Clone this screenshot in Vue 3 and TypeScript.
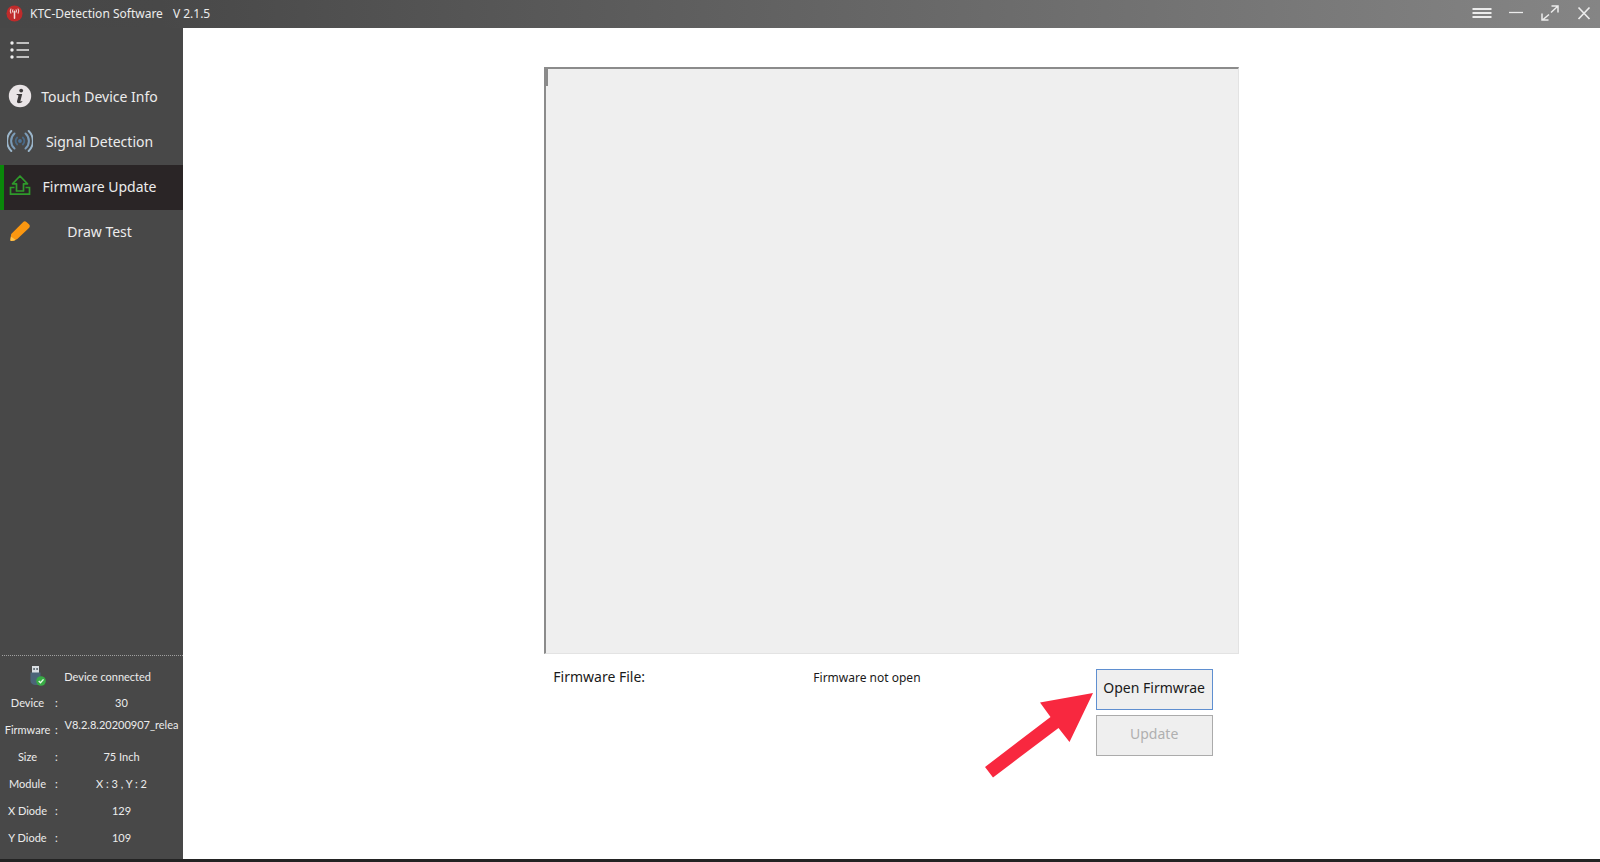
<script setup lang="ts">
import { ref } from 'vue'

type NavId = 'info' | 'signal' | 'firmware' | 'draw'

const navItems: { id: NavId; label: string }[] = [
  { id: 'info', label: 'Touch Device Info' },
  { id: 'signal', label: 'Signal Detection' },
  { id: 'firmware', label: 'Firmware Update' },
  { id: 'draw', label: 'Draw Test' },
]

const details: { name: string; value: string; long?: boolean }[] = [
  { name: 'Device', value: '30' },
  { name: 'Firmware', value: 'V8.2.8.20200907_relea', long: true },
  { name: 'Size', value: '75 Inch' },
  { name: 'Module', value: 'X : 3 , Y : 2' },
  { name: 'X Diode', value: '129' },
  { name: 'Y Diode', value: '109' },
]

const active = ref<NavId>('firmware')
const log = ref('')
</script>

<template>
  <div class="app">
    <header class="titlebar">
      <svg class="logo" viewBox="0 0 18 18" aria-hidden="true">
        <circle cx="9" cy="9" r="8.5" fill="#bf2b2b" />
        <g fill="none" stroke="#f3dcda" stroke-linecap="round">
          <path d="M9 6.500v7.500" stroke-width="1.600" />
          <path d="M5.200 4.200c-1 1.400-1 3 0 4.400M12.800 4.200c1 1.400 1 3 0 4.400M7.300 5c-.6.9-.6 1.800 0 2.700M10.700 5c.6.9.6 1.800 0 2.700" stroke-width="1.100" />
        </g>
      </svg>
      <h1 class="title">KTC-Detection Software</h1>
      <span class="version">V 2.1.5</span>
      <div class="window-controls">
        <button type="button" aria-label="Menu">
          <svg viewBox="0 0 20 20"><path d="M.5 6h19M.5 10h19M.5 14h19" stroke-width="1.800" /></svg>
        </button>
        <button type="button" aria-label="Minimize">
          <svg viewBox="0 0 20 20"><path d="M3 9.500h14" stroke-width="1.300" /></svg>
        </button>
        <button type="button" aria-label="Maximize">
          <svg viewBox="0 0 20 20"><path d="M11.500 3H18v6.500M18 3l-7 6.500M9 11.500L2.500 17M2 10.500V17h6.500" stroke-width="1.500" /></svg>
        </button>
        <button type="button" aria-label="Close">
          <svg viewBox="0 0 20 20"><path d="M4.500 4.500l11 11.500M15.500 4.500l-11 11.500" stroke-width="1.700" /></svg>
        </button>
      </div>
    </header>

    <div class="body">
      <aside class="sidebar">
        <button type="button" class="collapse" aria-label="Toggle sidebar">
          <svg viewBox="0 0 20 18">
            <g fill="#f0f0f0"><circle cx="2" cy="2" r="1.700" /><circle cx="2" cy="9" r="1.700" /><circle cx="2" cy="16" r="1.700" /></g>
            <path d="M6.500 2h12.500M6.500 9h12.500M6.500 16h12.500" stroke="#e8e8e8" stroke-width="1.400" />
          </svg>
        </button>

        <nav class="nav">
          <button
            v-for="item in navItems"
            :key="item.id"
            type="button"
            class="nav-item"
            :class="{ active: active === item.id }"
            @click="active = item.id"
          >
            <svg v-if="item.id === 'info'" viewBox="0 0 26 26">
              <circle cx="13" cy="13" r="11.200" fill="#e9e4e6" />
              <circle cx="14.200" cy="7.600" r="1.900" fill="#3d3a3b" />
              <path d="M9.800 11h5.400l-1.800 7c-.1.700.4.800 1.500 0l.6.700c-1.600 1.700-6 2.300-5.500-.4l1.400-5.400c.1-.6-.3-.8-1.800-.9z" fill="#3d3a3b" />
            </svg>
            <svg v-else-if="item.id === 'signal'" viewBox="0 0 26 26" fill="none" stroke-linecap="round">
              <circle cx="13" cy="13" r="1.900" fill="#4d7396" />
              <path d="M10.200 9.500a4.700 4.700 0 0 0 0 7M15.800 9.500a4.700 4.700 0 0 1 0 7" stroke="#4a6a88" stroke-width="1.800" />
              <path d="M7.500 5.500a10 10 0 0 0 0 15M18.500 5.500a10 10 0 0 1 0 15" stroke="#7b9bb7" stroke-width="2" />
              <path d="M4.300 3a14 14 0 0 0 0 20M21.700 3a14 14 0 0 1 0 20" stroke="#9bb6cb" stroke-width="2" />
            </svg>
            <svg v-else-if="item.id === 'firmware'" viewBox="0 0 26 26" fill="none" stroke="#2f9a2b" stroke-width="1.700">
              <path d="M9.500 18V10.800H5.500L13 3L20.500 10.800H16.500V18Z" stroke-linejoin="round" />
              <path d="M7.500 14.500H3.500V21.200H22.500V14.500H18.500" />
            </svg>
            <svg v-else viewBox="0 0 26 26">
              <path d="M3.400 21.800l.8-5.700L16.200 4q1.500-1.400 3.200 0l2.800 2.600q1.400 1.500 0 3.100L10.300 21q-3 2-6.300 2-.8-.2-.6-1.200z" fill="#fb9710" />
              <path d="M3.400 21.800l.5-3.300 4.800 3.500q-2 .9-4.700 1-.8-.2-.6-1.200z" fill="#ffc34d" />
            </svg>
            <span>{{ item.label }}</span>
          </button>
        </nav>

        <section class="status" aria-label="Device status">
          <div class="connection">
            <svg viewBox="0 0 18 22" aria-hidden="true">
              <path d="M4 1h7v7H4z" fill="#d9dee2" />
              <path d="M5.200 3h1.800v2H5.200zM8.200 3h1.800v2H8.200z" fill="#6a747c" />
              <path d="M2.500 7.500h10V17q0 3-3 3h-2.500q-4.500-1-4.500-4z" fill="#4c6478" />
              <circle cx="13" cy="16" r="4.800" fill="#38ab45" />
              <path d="M10.700 16l1.800 1.800 3-3.400" fill="none" stroke="#e5ffe5" stroke-width="1.400" />
            </svg>
            <span>Device connected</span>
          </div>
          <dl class="details">
            <div v-for="row in details" :key="row.name" class="detail">
              <dt><span>{{ row.name }}</span><span>:</span></dt>
              <dd :class="{ long: row.long }">{{ row.value }}</dd>
            </div>
          </dl>
        </section>
      </aside>

      <main class="content">
        <div class="panel">
          <textarea v-model="log" class="log" aria-label="Update log" readonly></textarea>
          <span class="caret" aria-hidden="true"></span>
          <div class="controls">
            <span class="file-label">Firmware File:</span>
            <output class="file-state">Firmware not open</output>
            <div class="actions">
              <button type="button" class="open">Open Firmwrae</button>
              <button type="button" disabled>Update</button>
              <svg class="pointer" viewBox="0 0 108 85" aria-hidden="true">
                <path d="M108 0L55 9.500L65.500 24L0 74L8 84.500L73.500 35L84.500 49Z" fill="#f8283f" />
              </svg>
            </div>
          </div>
        </div>
      </main>
    </div>
  </div>
</template>

<style>
body {
  margin: 0;
}
</style>

<style scoped>
.app {
  display: flex;
  flex-direction: column;
  height: 100vh;
  box-sizing: border-box;
  border-bottom: 3px solid #232323;
  background: #fff;
  color: #1a1a1a;
  font-family: "Noto Sans", "Open Sans", sans-serif;
}

button {
  font: inherit;
  cursor: pointer;
}

.titlebar {
  display: flex;
  align-items: center;
  flex: none;
  height: 28px;
  padding: 0 6px 2px;
  box-sizing: border-box;
  background: linear-gradient(90deg, #474747, #484848 10%, #858585);
  color: #ececec;
  font-size: 12px;
}

.logo {
  width: 17px;
  height: 17px;
  margin-right: 7px;
}

.title {
  margin: 0 10px 0 0;
  font-size: 12px;
  font-weight: 400;
}

.window-controls {
  display: flex;
  gap: 14px;
  margin-left: auto;
}

.window-controls button {
  padding: 0;
  border: 0;
  background: none;
}

.window-controls svg {
  display: block;
  width: 20px;
  height: 26px;
  fill: none;
  stroke: #ececec;
}

.body {
  display: flex;
  flex: 1;
  min-height: 0;
}

.sidebar {
  display: flex;
  flex-direction: column;
  flex: none;
  width: 183px;
  background: #484848;
  color: #ececec;
}

.collapse {
  height: 47px;
  padding: 0 10px 4px;
  border: 0;
  background: none;
  text-align: left;
}

.collapse svg {
  display: block;
  width: 20px;
  height: 18px;
}

.nav-item {
  display: flex;
  align-items: center;
  width: 100%;
  height: 45px;
  padding: 0 17px 3px 3px;
  border: 0;
  border-left: 4px solid transparent;
  background: none;
  color: inherit;
  font-size: 14px;
}

.nav-item.active {
  border-left-color: #0a870a;
  background: #2a2526;
}

.nav-item svg {
  flex: none;
  width: 26px;
  height: 26px;
}

.nav-item span {
  flex: 1;
  text-align: center;
  white-space: nowrap;
}

.status {
  margin-top: auto;
  padding-bottom: 8px;
  font-family: Lato, "Noto Sans", sans-serif;
  font-size: 11px;
}

.connection {
  display: flex;
  align-items: center;
  justify-content: space-between;
  height: 34px;
  margin-left: 2px;
  padding: 7px 32px 0 26px;
  box-sizing: border-box;
  border-top: 1px dotted #a0a0a0;
  white-space: nowrap;
}

.connection svg {
  width: 18px;
  height: 22px;
}

.details {
  margin: 0;
}

.detail {
  display: flex;
  align-items: center;
  height: 27px;
}

dt {
  display: flex;
  flex: none;
  width: 60px;
}

dt span:first-child {
  width: 55px;
  text-align: center;
}

dd {
  flex: 1;
  margin: 0;
  text-align: center;
  white-space: nowrap;
}

dd.long {
  padding-bottom: 10px;
}

.content {
  display: flex;
  justify-content: center;
  flex: 1;
  min-width: 0;
  padding: 39px 0 103px;
}

.panel {
  position: relative;
  display: flex;
  flex-direction: column;
  width: 49%;
}

.log {
  flex: 1;
  box-sizing: border-box;
  width: 100%;
  min-height: 0;
  margin: 0;
  border: 1px solid #e3e3e3;
  border-top: 2px solid #8b8b8b;
  border-left: 2px solid #8b8b8b;
  background: #efefef;
  resize: none;
  outline: none;
}

.caret {
  position: absolute;
  top: 2px;
  left: 2px;
  width: 2px;
  height: 17px;
  background: #8a8a8a;
}

.controls {
  display: grid;
  grid-template-columns: 260px 1fr 117px;
  padding: 15px 26px 0 9px;
}

.file-label {
  font-size: 14px;
  line-height: 16px;
}

.file-state {
  font-size: 12px;
  line-height: 18px;
}

.actions {
  position: relative;
  display: flex;
  flex-direction: column;
  gap: 5px;
}

.actions button {
  height: 41px;
  padding: 0 0 4px;
  border: 1px solid #ababab;
  background: #efefef;
  color: #1a1a1a;
  font-size: 14px;
  white-space: nowrap;
}

.actions button.open {
  border-color: #5f8fd0;
}

.actions button:disabled {
  color: #b0b0b0;
}

.pointer {
  position: absolute;
  top: 24px;
  right: 120px;
  width: 108px;
  height: 85px;
}
</style>
